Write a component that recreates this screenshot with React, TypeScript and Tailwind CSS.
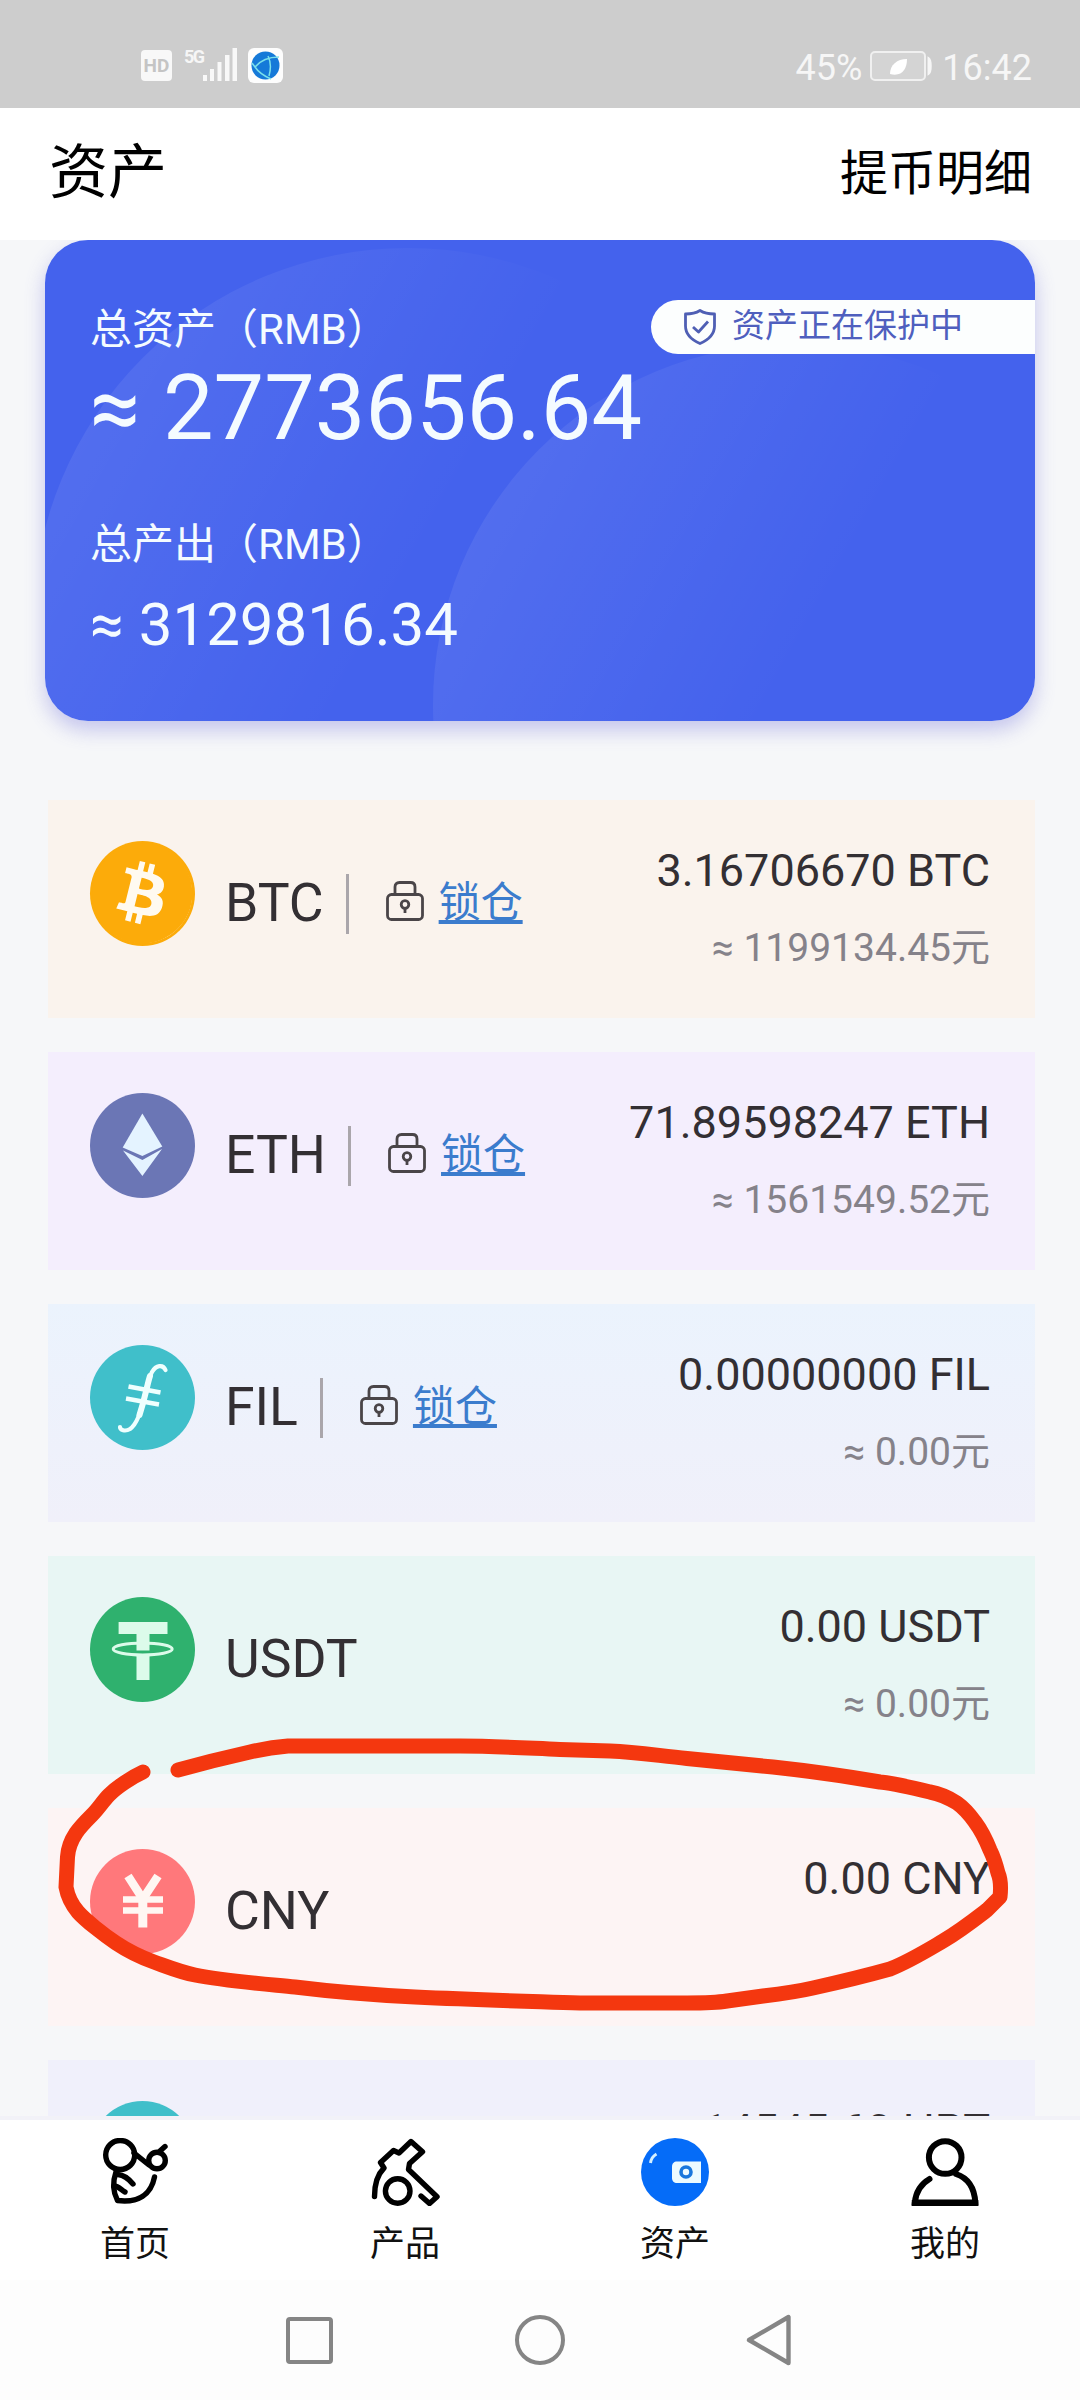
import React from 'react'
import { FaBitcoin } from 'react-icons/fa'

type Asset = {
  symbol: string
  amount: string
  value?: string
  lockable?: boolean
  bg: string
  icon: React.ReactNode
}

// Coin icons
function BtcIcon() {
  return (
    <div className="w-[105px] h-[105px] rounded-full bg-[#fcab0a] flex items-center justify-center">
      <div className="w-[98px] h-[98px] rounded-full bg-[#fffaf0] flex items-center justify-center">
        <FaBitcoin className="w-[103px] h-[103px] shrink-0 text-[#fcab0a]" />
      </div>
    </div>
  )
}

function EthIcon() {
  return (
    <svg viewBox="0 0 105 105" className="w-[105px] h-[105px]">
      <circle cx="52.5" cy="52.5" r="52.5" fill="#6b76b5" />
      <path d="M52.4 20.5 72.3 53.5 52.4 63 32.7 54.5Z" fill="#e4f3ff" />
      <path d="M33 57.5 52.4 67 72 56 52.4 83Z" fill="#e4f3ff" />
    </svg>
  )
}

function FilIcon() {
  return (
    <svg viewBox="0 0 105 105" className="w-[105px] h-[105px]">
      <circle cx="52.5" cy="52.5" r="52.5" fill="#40bfca" />
      <g fill="none" stroke="#effffe" strokeLinecap="round">
        <path d="M75.500 25C73 19 66 20 62 27C57 36 56 47 53 57C50 68 47 79 40 84C35 87 30 85 30 82" strokeWidth="4.200" />
        <path d="M60 31C57 40 56 50 49.500 70" strokeWidth="6" />
        <path d="M38.500 41.500 70.500 47.500M36 53.500 69 59.500" strokeWidth="4.500" strokeLinecap="butt" />
      </g>
    </svg>
  )
}

function UsdtIcon() {
  return (
    <svg viewBox="0 0 105 105" className="w-[105px] h-[105px]">
      <circle cx="52.5" cy="52.5" r="52.5" fill="#2fb16e" />
      <ellipse cx="52.7" cy="52" rx="29.5" ry="6" fill="none" stroke="#dcfbea" strokeWidth="3" />
      <path d="M28.6 25H77.5V37H59.5V53.5H46.5V37H28.6Z" fill="#dcfbea" />
      <path d="M46.5 57.5H59.5V83H46.5Z" fill="#dcfbea" />
    </svg>
  )
}

function CnyIcon() {
  return (
    <svg viewBox="0 0 105 105" className="w-[105px] h-[105px]">
      <circle cx="52.5" cy="52.5" r="52.5" fill="#ff787b" />
      <g fill="none" stroke="#fff7f3">
        <path d="M38 27 52.8 50 68 27" strokeWidth="8.5" />
        <path d="M52.8 48V78.5" strokeWidth="9" />
        <path d="M33 50.5H73M33 61.5H73" strokeWidth="6.5" />
      </g>
    </svg>
  )
}

function LockIcon() {
  return (
    <svg viewBox="0 0 38 40" className="w-[38px] h-[40px]" fill="none" stroke="#4a4548" strokeWidth="2.8">
      <rect x="1.5" y="13.5" width="35" height="25" rx="4" />
      <path d="M9 13V6C9 3 10.500 1.500 13.500 1.500H24.500C27.500 1.500 29 3 29 6V13" />
      <circle cx="19" cy="23.500" r="3.800" />
      <path d="M19 27V32" />
    </svg>
  )
}

// Tab bar icons
function HomeIcon() {
  return (
    <svg viewBox="0 0 68 68" className="w-[68px] h-[68px]" fill="none" stroke="#000" strokeWidth="5.4" strokeLinecap="round" strokeLinejoin="round">
      <circle cx="19.200" cy="17" r="14.500" />
      <circle cx="56" cy="22.500" r="8.300" />
      <path d="M33 15 48 27" />
      <path d="M59 13 64 8.500" />
      <path d="M15 34C11.500 44 12 54 16.500 62.500C37 65 50 57 53.500 39" />
      <path d="M17 36.500C23 37 27 40 32 46M13 48C18 48 20 52 24 54" />
    </svg>
  )
}

function ProductIcon() {
  return (
    <svg viewBox="0 0 70 68" className="w-[70px] h-[68px]" fill="none" stroke="#000" strokeWidth="5.4" strokeLinecap="round" strokeLinejoin="round">
      <path d="M4.500 58.500C4.500 46 7 37 14 30L10.500 24.500 23.500 12.500 29 15 41 3.500 52.500 13.700 39.500 25.500 38.500 31.500 67 58.700 59.500 65.500 51 58" />
      <circle cx="27.700" cy="53" r="12.300" />
    </svg>
  )
}

function WalletIcon() {
  return (
    <svg viewBox="0 0 68 68" className="w-[68px] h-[68px]">
      <circle cx="34" cy="34" r="34" fill="#056cf8" />
      <path d="M36 23.500H60V45H36C33 45 31 43 31 40V28.500C31 25.500 33 23.500 36 23.500Z" fill="#ecfbff" />
      <circle cx="45" cy="34" r="5" fill="none" stroke="#1a78dc" strokeWidth="3.6" />
      <path d="M9.500 25C10 21 12 18 15.500 16" fill="none" stroke="#d5f0ff" strokeWidth="3" />
    </svg>
  )
}

function UserIcon() {
  return (
    <svg viewBox="0 0 68 68" className="w-[68px] h-[68px]" fill="none" stroke="#000" strokeWidth="6">
      <circle cx="34.200" cy="19.500" r="16.300" />
      <path d="M18.500 41C10 46 5 53 3.800 64.500H64.300C63.500 50 57 40 45 36" strokeLinecap="round" />
      <path d="M.8 65H67.300" />
    </svg>
  )
}

const assets: Asset[] = [
  { symbol: 'BTC', amount: '3.16706670 BTC', value: '≈ 1199134.45元', lockable: true, bg: 'bg-[#faf3ed]', icon: <BtcIcon /> },
  { symbol: 'ETH', amount: '71.89598247 ETH', value: '≈ 1561549.52元', lockable: true, bg: 'bg-[#f4eefd]', icon: <EthIcon /> },
  { symbol: 'FIL', amount: '0.00000000 FIL', value: '≈ 0.00元', lockable: true, bg: 'bg-linear-to-b from-[#ebf3fd] to-[#f0f0fa]', icon: <FilIcon /> },
  { symbol: 'USDT', amount: '0.00 USDT', value: '≈ 0.00元', bg: 'bg-[#e8f6f4]', icon: <UsdtIcon /> },
  { symbol: 'CNY', amount: '0.00 CNY', bg: 'bg-[#fdf4f4]', icon: <CnyIcon /> },
  { symbol: 'HPT', amount: '14545.60 HPT', bg: 'bg-[#f0f0fb]', icon: <FilIcon /> },
]

const tabs = [
  { label: '首页', icon: <HomeIcon /> },
  { label: '产品', icon: <ProductIcon /> },
  { label: '资产', icon: <WalletIcon /> },
  { label: '我的', icon: <UserIcon /> },
]

function StatusBar() {
  return (
    <div className="h-[108px] shrink-0 bg-[#cdcdcd] flex items-start justify-between pl-[141px] pr-[48px] pt-[48px] text-[#f6f6f6]">
      <div className="flex items-start">
        <div className="mt-[2px] w-[31px] h-[31px] rounded-[4px] bg-[#f8f8f8] text-[#c4c4c4] text-[19px] font-bold leading-[31px] text-center">HD</div>
        <div className="ml-[12px] flex items-start">
          <span className="text-[18px] leading-[18px] w-[19px] font-bold tracking-[-1.5px]">5G</span>
          <svg viewBox="0 0 35 34" className="w-[35px] h-[34px]" fill="#f8f8f8">
            <rect x="0" y="27" width="4" height="6" />
            <rect x="7" y="21" width="4" height="12" />
            <rect x="14.500" y="14" width="4" height="19" />
            <rect x="22" y="7" width="4.500" height="26" />
            <rect x="29.500" y="0" width="4.500" height="33" />
          </svg>
        </div>
        <svg viewBox="0 0 35 35" className="ml-[10px] w-[35px] h-[35px]">
          <rect width="35" height="35" rx="6" fill="#fdfdfd" />
          <circle cx="17.500" cy="17.500" r="14" fill="#1579d8" />
          <path d="M31 9C20 9 12 13 7 19C11 25 16 28 23 31M7 19 4 15M20 8C23 14 23 21 21 28" fill="none" stroke="#7be0ea" strokeWidth="1.5" />
        </svg>
      </div>
      <div className="flex items-start text-[36px] leading-none">
        <span className="mt-[2px]">45%</span>
        <svg viewBox="0 0 64 31" className="ml-[8px] mt-[3px] w-[64px] h-[31px]">
          <rect x="1" y="1" width="54" height="28" rx="4" fill="#d4d4d4" stroke="#f0f0f0" strokeWidth="2" />
          <path d="M20 23C20 14 27 8 37 8C37 18 32 26 20 23Z" fill="#fff" />
          <path d="M58.500 7C61.500 9 61.500 21 58.500 23Z" fill="#f6f6f6" stroke="#f6f6f6" strokeWidth="2" />
        </svg>
        <span className="mt-[2px] ml-[8px]">16:42</span>
      </div>
    </div>
  )
}

function SummaryCard() {
  return (
    <section className="relative w-[990px] h-[481px] rounded-[43px] overflow-hidden bg-[#4462ed] text-[#f4fbff]">
      {/* decorative circles */}
      <svg viewBox="0 0 990 481" className="absolute inset-0 w-[990px] h-[481px]">
        <defs>
          <linearGradient id="glow" x1="0.05" y1="0.2" x2="0.5" y2="0.45">
            <stop offset="0" stopColor="#fff" stopOpacity="0.08" />
            <stop offset="1" stopColor="#fff" stopOpacity="0" />
          </linearGradient>
        </defs>
        <circle cx="363" cy="383" r="375" fill="url(#glow)" />
        <circle cx="749" cy="465" r="361" fill="url(#glow)" />
      </svg>
      <div className="relative flex justify-between">
        <div className="pl-[45px] leading-none whitespace-nowrap">
          <p className="pt-[69px] text-[42px] leading-[42px]">总资产（RMB）</p>
          <p className="mt-[13px] text-[90px] leading-[90px]">≈ 2773656.64</p>
          <p className="mt-[70px] text-[42px] leading-[42px]">总产出（RMB）</p>
          <p className="mt-[29px] text-[60px] leading-[60px]">≈ 3129816.34</p>
        </div>
        <div className="mt-[60px] w-[384px] h-[54px] rounded-l-full bg-[#fcfefe] flex items-center pl-[33px] text-[#4f5fbe]">
          <svg viewBox="0 0 32 36" className="w-[32px] h-[36px]" fill="none" stroke="#4f5fb4" strokeWidth="2.8" strokeLinejoin="round">
            <path d="M16 1.500C20 4 25 5 30.500 5V17C30.500 25 24 31 16 34.500C8 31 1.500 25 1.500 17V5C7 5 12 4 16 1.500Z" />
            <path d="M9 18 14.500 23 24 12.500" />
          </svg>
          <span className="ml-[16px] -mt-[3px] text-[33px] leading-none">资产正在保护中</span>
        </div>
      </div>
    </section>
  )
}

function AssetRow({ asset }: { asset: Asset }) {
  return (
    <div className={`h-[218px] shrink-0 flex items-start pl-[42px] pr-[45px] leading-none text-[#332f33] ${asset.bg}`}>
      <div className="mt-[41px] shrink-0">{asset.icon}</div>
      <span className="mt-[76px] ml-[30px] text-[53.5px] leading-[53px]">{asset.symbol}</span>
      {asset.lockable && (
        <>
          <div className="mt-[74px] ml-[22px] w-[3px] h-[60px] bg-[#aaa6ab]" />
          <div className="mt-[81px] ml-[37px]">
            <LockIcon />
          </div>
          <a className="mt-[82px] ml-[15px] text-[42px] leading-[42px] text-[#3b7ccd] underline decoration-4 underline-offset-[3px] [text-decoration-skip-ink:none]">
            锁仓
          </a>
        </>
      )}
      <div className="ml-auto pt-[48px] flex flex-col items-end whitespace-nowrap">
        <span className="text-[45px] leading-[45px]">{asset.amount}</span>
        {asset.value && <span className="mt-[36px] text-[39px] leading-[39px] text-[#85828a]">{asset.value}</span>}
      </div>
    </div>
  )
}

// Freehand circle drawn around the CNY row
function Marker() {
  return (
    <svg viewBox="0 0 1080 300" className="absolute left-0 top-[1730px] w-[1080px] h-[300px] pointer-events-none">
      <path
        d="M143 42C132 47 117 57 109 65C103 71 99 78 92 85C86 91 80 97 76 103C70 112 68 118 67.500 127L66 157C68 168 72 175 78 182C85 190 104 205 116 213C128 221 140 227 154 232C168 237 180 242 195 245C225 251 265 254 295 257C335 262 375 265 415 267C480 270 520 271 580 273H687C705 273 715 273 727 271L763 266C780 264 796 262 813 258C840 252 865 246 890 239C910 231 926 221 943 211C960 201 974 190 987 180L1000 167C1001 158 1001 150 998 143C996 135 994 128 990 120C986 110 981 100 975 92C970 85 964 78 957 73C949 68 941 64 930 62C914 58 898 54 880 52C845 46 810 41 773 37L687 28.500C660 26 638 22 610 21L560 19.500C525 18 495 16 460 16H288C275 17 263 19 250 22L212 31 178 40"
        fill="none"
        stroke="#f4370f"
        strokeWidth="15"
        strokeLinecap="round"
        strokeLinejoin="round"
      />
    </svg>
  )
}

function App() {
  return (
    <div className="relative w-[1080px] h-[2400px] overflow-hidden flex flex-col bg-[#f6f7f9] font-['Roboto','Noto_Sans_CJK_SC',sans-serif]">
      <StatusBar />

      <header className="h-[132px] shrink-0 bg-white flex items-start justify-between pl-[49px] pr-[48px] text-black leading-none">
        <h1 className="mt-[35px] text-[59px] leading-[59px]">资产</h1>
        <span className="mt-[42px] text-[48px] leading-[48px]">提币明细</span>
      </header>

      <main className="h-[1876px] shrink-0 flex flex-col overflow-hidden">
        <div className="ml-[45px] w-[990px] shrink-0 rounded-[43px] shadow-[0_9px_20px_rgba(90,90,210,0.32)]">
          <SummaryCard />
        </div>
        <div className="mt-[79px] ml-[48px] w-[987px] flex flex-col gap-[34px]">
          {assets.map((asset) => (
            <AssetRow key={asset.symbol} asset={asset} />
          ))}
        </div>
      </main>

      <nav className="h-[164px] shrink-0 bg-white border-t-4 border-[#f2f2f8] grid grid-cols-4">
        {tabs.map((tab) => (
          <div key={tab.label} className="flex flex-col items-center pt-[18px] text-[#111]">
            {tab.icon}
            <span className="mt-[21px] text-[35px] leading-[35px]">{tab.label}</span>
          </div>
        ))}
      </nav>

      {/* Android system buttons */}
      <div className="h-[120px] shrink-0 bg-[#fdfdfd] flex items-start pt-[34px] pl-[286px]">
        <div className="mt-[3px] w-[47px] h-[47px] rounded-[4px] border-4 border-[#858585]" />
        <div className="mt-px ml-[182px] w-[50px] h-[50px] rounded-full border-4 border-[#858585]" />
        <svg viewBox="0 0 46 52" className="ml-[181px] w-[46px] h-[52px]" fill="none" stroke="#858585" strokeWidth="4.4" strokeLinejoin="round">
          <path d="M3 26 42.500 3V49Z" />
        </svg>
      </div>

      <Marker />
    </div>
  )
}

export default App
